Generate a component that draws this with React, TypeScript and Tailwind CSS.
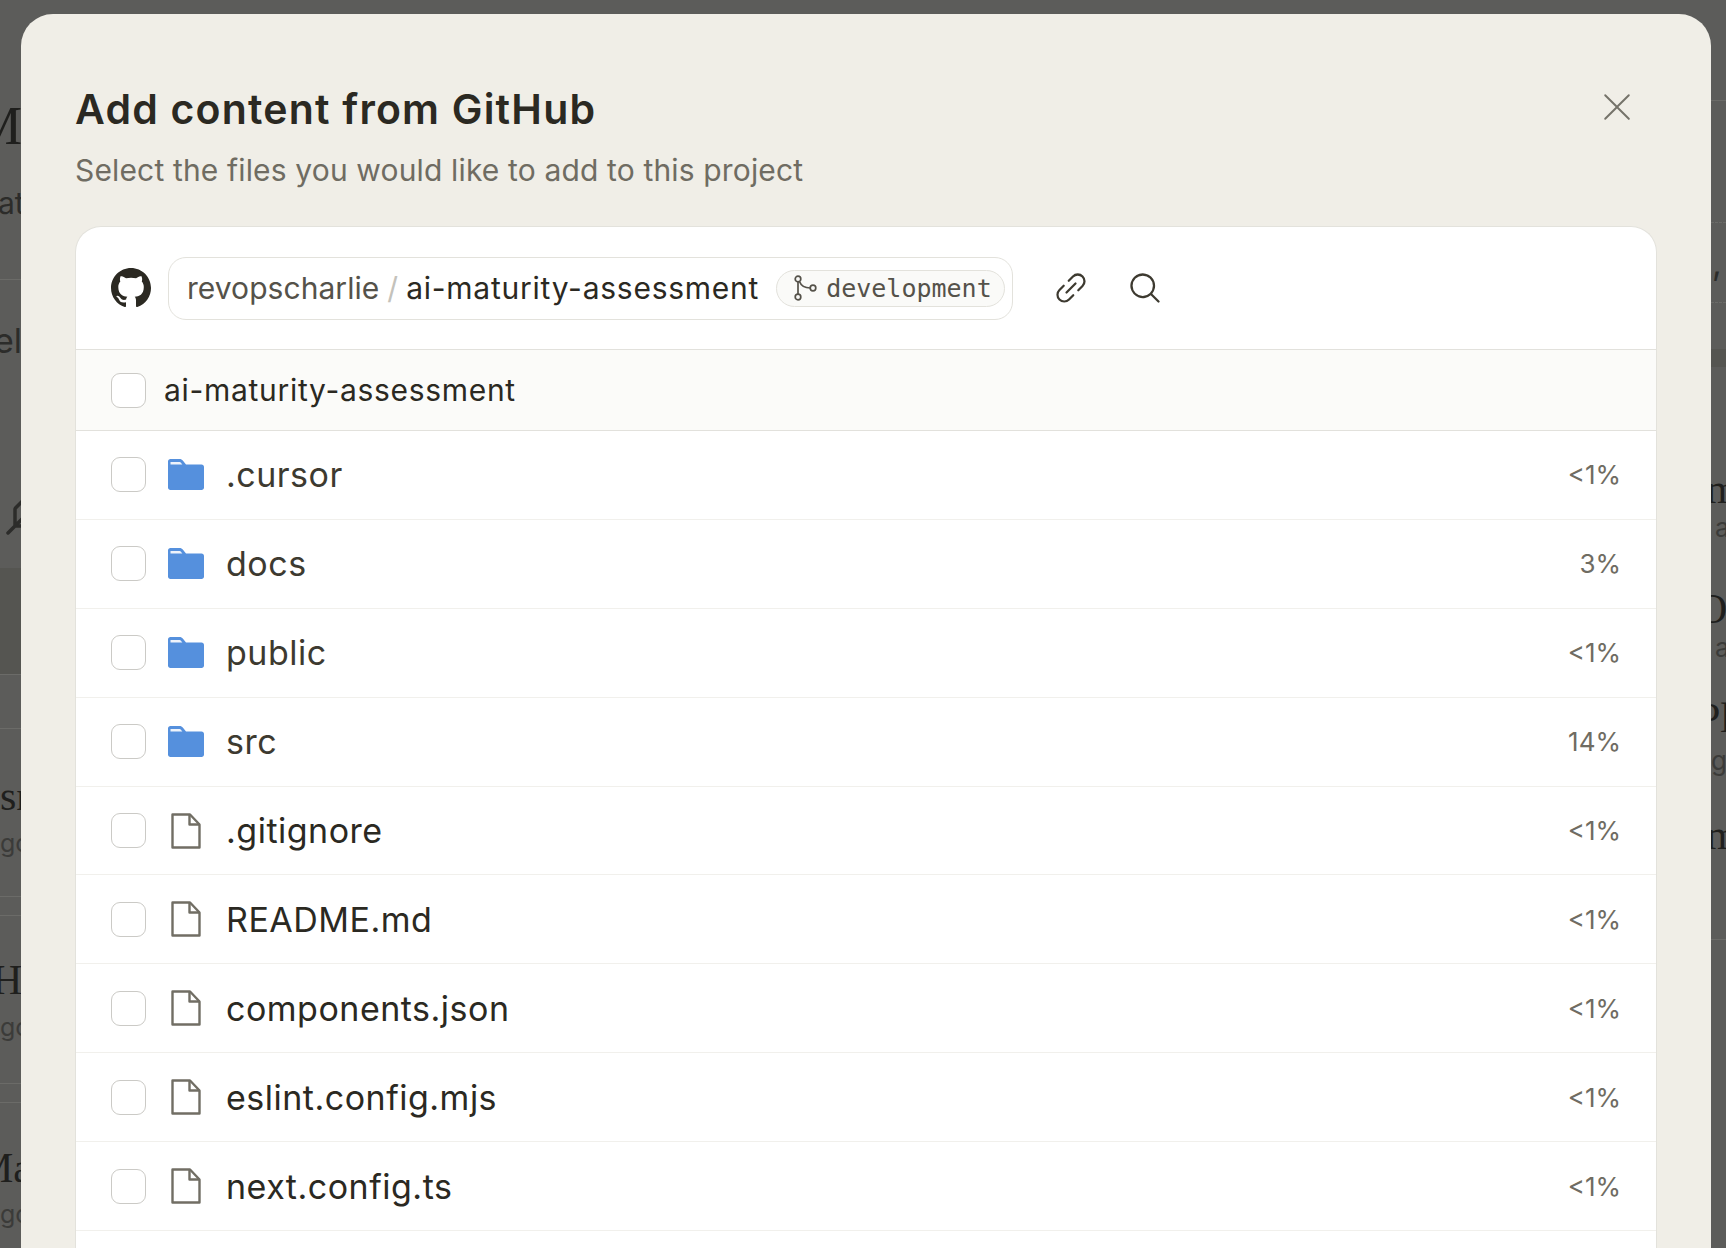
import { BsGithub } from "react-icons/bs";
import { PiLinkSimple, PiMagnifyingGlass, PiXLight, PiFeather } from "react-icons/pi";

const rows = [
  { name: ".cursor", pct: "<1%", folder: true },
  { name: "docs", pct: "3%", folder: true },
  { name: "public", pct: "<1%", folder: true },
  { name: "src", pct: "14%", folder: true },
  { name: ".gitignore", pct: "<1%", folder: false },
  { name: "README.md", pct: "<1%", folder: false },
  { name: "components.json", pct: "<1%", folder: false },
  { name: "eslint.config.mjs", pct: "<1%", folder: false },
  { name: "next.config.ts", pct: "<1%", folder: false },
];

function FolderIcon() {
  return (
    <svg width="36" height="31" viewBox="0 0 36 31" className="shrink-0">
      <path d="M2.5 0H11.5C13 0 14 .6 15 1.8L18 5.5H33.5C35 5.5 36 6.5 36 8V28.5C36 30 35 31 33.5 31H2.5C1 31 0 30 0 28.5V2.5C0 1 1 0 2.5 0Z" fill="#5590dd" />
      <path d="M2.5 3H11C12 3 12.8 3.4 13.5 4.4L14.4 5.5H2.5Z" fill="#eef3fb" />
    </svg>
  );
}

function FileIcon() {
  return (
    <svg width="30" height="36" viewBox="0 0 30 36" className="shrink-0" fill="none" stroke="#716e64" strokeWidth="2.4" strokeLinejoin="round">
      <path d="M1.5 1.5H19L28.5 11.5V34.5H1.5Z" />
      <path d="M18.5 1.5V11.5H28.5" />
    </svg>
  );
}

function BranchIcon() {
  return (
    <svg width="24" height="26" viewBox="0 0 24 26" className="shrink-0" fill="none" stroke="#55524a" strokeWidth="1.7">
      <circle cx="5" cy="4" r="2.8" />
      <circle cx="5" cy="22" r="2.8" />
      <circle cx="20" cy="13" r="2.8" />
      <path d="M5 6.8V19.2" />
      <path d="M6.5 6.5C8 10.5 11 13 17.2 13" />
    </svg>
  );
}

function Checkbox() {
  return <div className="h-[35px] w-[35px] shrink-0 rounded-[9px] border-[1.5px] border-[#cbcac6] bg-white" />;
}

function Row({ name, pct, folder }: { name: string; pct: string; folder: boolean }) {
  return (
    <div className="flex h-[88.9px] items-center border-b border-[#f1f0ec] pl-[35px] pr-[35px]">
      <Checkbox />
      <div className="ml-[22px] flex w-[36px] justify-center">{folder ? <FolderIcon /> : <FileIcon />}</div>
      <span className={`ml-[22px] text-[34px] tracking-[0.5px] ${folder ? "text-[#3d3a30]" : "text-[#2b2922]"}`}>{name}</span>
      <span className="ml-auto text-[26px] text-[#6f6c62]">{pct}</span>
    </div>
  );
}

export default function App() {
  return (
    <div className="relative flex h-screen justify-between overflow-hidden bg-[#5c5c5a] font-['Inter',sans-serif]">
      <div className="flex h-full w-[21px] flex-col overflow-hidden whitespace-nowrap">
        <div className="h-[88px]" />
        <div className="-ml-[26px] flex h-[76px] items-center font-['Liberation_Serif',serif] text-[54px] text-[#1f1f1d]">M</div>
        <div className="-ml-[2px] flex h-[78px] items-center text-[30px] text-[#2c2c2a]">at</div>
        <div className="h-[38px] border-b border-[#6b6b68]" />
        <div className="-ml-[6px] flex h-[120px] items-center text-[34px] text-[#2c2c2a]">elp</div>
        <div className="h-[89px]" />
        <div className="flex h-[46px] items-center"><PiFeather className="ml-[1px] shrink-0 text-[56px] text-[#2c2c2a]" /></div>
        <div className="h-[33px]" />
        <div className="h-[107px] border-b border-[#6b6b68] bg-[#555551]" />
        <div className="h-[54px] border-b border-[#6b6b68]" />
        <div className="h-[46px]" />
        <div className="flex h-[42px] items-center font-['Liberation_Serif',serif] text-[42px] text-[#1f1f1d]">sn</div>
        <div className="flex h-[54px] items-center text-[25px] text-[#3b3b39]">go</div>
        <div className="h-[26px] border-b border-[#6b6b68]" />
        <div className="h-[19px] border-b border-[#6b6b68]" />
        <div className="h-[43px]" />
        <div className="-ml-[8px] flex h-[42px] items-center font-['Liberation_Serif',serif] text-[42px] text-[#1f1f1d]">Hy</div>
        <div className="flex h-[54px] items-center text-[25px] text-[#3b3b39]">go</div>
        <div className="h-[29px] border-b border-[#6b6b68]" />
        <div className="h-[19px] border-b border-[#6b6b68]" />
        <div className="h-[44px]" />
        <div className="-ml-[24px] flex h-[42px] items-center font-['Liberation_Serif',serif] text-[42px] text-[#1f1f1d]">Ma</div>
        <div className="flex h-[52px] items-center text-[25px] text-[#3b3b39]">go</div>
      </div>

      <div className="flex h-full w-[15px] flex-col overflow-hidden whitespace-nowrap">
        <div className="h-[101px] border-b border-[#6b6b68]" />
        <div className="h-[122px] border-b border-dashed border-[#6b6b68]" />
        <div className="flex h-[80px] items-center border-b border-dashed border-[#6b6b68] pl-[1px] text-[34px] text-[#2c2c2a]">, l</div>
        <div className="h-[46px]" />
        <div className="h-[18px] bg-[#555551]" />
        <div className="h-[102px]" />
        <div className="-ml-[5px] flex h-[40px] items-center font-['Liberation_Serif',serif] text-[42px] text-[#1f1f1d]">m</div>
        <div className="flex h-[36px] items-center pl-[4px] text-[26px] text-[#3b3b39]">a</div>
        <div className="h-[44px]" />
        <div className="-ml-[14px] flex h-[40px] items-center font-['Liberation_Serif',serif] text-[42px] text-[#1f1f1d]">Ov</div>
        <div className="flex h-[36px] items-center pl-[4px] text-[26px] text-[#3b3b39]">a</div>
        <div className="h-[33px]" />
        <div className="-ml-[14px] flex h-[40px] items-center font-['Liberation_Serif',serif] text-[42px] text-[#1f1f1d]">Pl</div>
        <div className="flex h-[44px] items-center text-[26px] text-[#3b3b39]">g</div>
        <div className="h-[33px]" />
        <div className="-ml-[5px] flex h-[40px] items-center font-['Liberation_Serif',serif] text-[42px] text-[#1f1f1d]">m</div>
        <div className="h-[85px] border-b border-[#6b6b68]" />
      </div>

      {/* dialog */}
      <div className="absolute left-[21px] right-[15px] top-[14px] bottom-0 flex flex-col overflow-hidden rounded-t-[32px] bg-[#f0eee7] pl-[54px] pr-[54px]">
        <div className="relative pt-[68px]">
          <h1 className="text-[41px] font-semibold leading-[54px] tracking-[1.2px] text-[#2b2922]">Add content from GitHub</h1>
          <p className="mt-[14px] text-[30px] leading-[40px] tracking-[0.15px] text-[#6f6c62]">Select the files you would like to add to this project</p>
          <PiXLight className="absolute right-[19px] top-[72px] text-[42px] text-[#75736a]" />
        </div>
        <div className="mt-[36px] flex min-h-0 flex-1 flex-col overflow-hidden rounded-t-[26px] border border-b-0 border-[#e3e2dc] bg-white">
          <div className="flex h-[123px] shrink-0 items-center border-b border-[#e2e1dc] pl-[35px]">
            <BsGithub className="shrink-0 text-[40px] text-[#2b2922]" />
            <div className="ml-[17px] flex h-[63px] w-[845px] items-center rounded-[18px] border border-[#e3e2dc] pl-[18px]">
              <span className="text-[30px] tracking-[0.05px] text-[#55524a]">revopscharlie</span>
              <span className="ml-[8px] text-[30px] text-[#c4c2bb]">/</span>
              <span className="ml-[8px] text-[30px] tracking-[0.75px] text-[#2b2922]">ai-maturity-assessment</span>
              <span className="ml-[17px] flex h-[37px] w-[229px] items-center rounded-full border border-[#e3e2dc] bg-[#fafaf8] pl-[16px]">
                <BranchIcon />
                <span className="ml-[9px] font-['DejaVu_Sans_Mono',monospace] text-[25px] leading-none text-[#55524a]">development</span>
              </span>
            </div>
            <PiLinkSimple className="ml-[40px] shrink-0 text-[36px] text-[#3d3a30]" />
            <PiMagnifyingGlass className="ml-[38px] shrink-0 text-[36px] text-[#3d3a30]" />
          </div>
          <div className="flex h-[81px] shrink-0 items-center border-b border-[#e2e1dc] bg-[#fbfbf9] pl-[35px]">
            <Checkbox />
            <span className="ml-[18px] text-[30px] tracking-[0.7px] text-[#2b2922]">ai-maturity-assessment</span>
          </div>
          {rows.map((r) => (
            <Row key={r.name} {...r} />
          ))}
        </div>
      </div>
    </div>
  );
}
